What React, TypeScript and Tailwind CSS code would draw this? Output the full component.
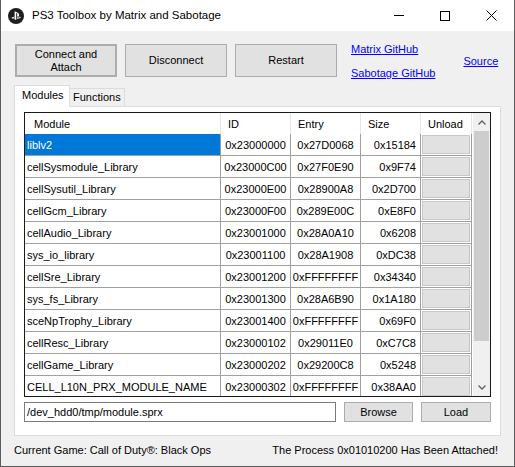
import React from 'react';

type ModuleRow = {
  name: string;
  id: string;
  entry: string;
  size: string;
};

const rows: ModuleRow[] = [
  { name: 'liblv2', id: '0x23000000', entry: '0x27D0068', size: '0x15184' },
  { name: 'cellSysmodule_Library', id: '0x23000C00', entry: '0x27F0E90', size: '0x9F74' },
  { name: 'cellSysutil_Library', id: '0x23000E00', entry: '0x28900A8', size: '0x2D700' },
  { name: 'cellGcm_Library', id: '0x23000F00', entry: '0x289E00C', size: '0xE8F0' },
  { name: 'cellAudio_Library', id: '0x23001000', entry: '0x28A0A10', size: '0x6208' },
  { name: 'sys_io_library', id: '0x23001100', entry: '0x28A1908', size: '0xDC38' },
  { name: 'cellSre_Library', id: '0x23001200', entry: '0xFFFFFFFF', size: '0x34340' },
  { name: 'sys_fs_Library', id: '0x23001300', entry: '0x28A6B90', size: '0x1A180' },
  { name: 'sceNpTrophy_Library', id: '0x23001400', entry: '0xFFFFFFFF', size: '0x69F0' },
  { name: 'cellResc_Library', id: '0x23000102', entry: '0x29011E0', size: '0xC7C8' },
  { name: 'cellGame_Library', id: '0x23000202', entry: '0x29200C8', size: '0x5248' },
  { name: 'CELL_L10N_PRX_MODULE_NAME', id: '0x23000302', entry: '0xFFFFFFFF', size: '0x38AA0' },
];

const cols = 'grid grid-cols-[196px_70px_70px_60px_51px]';

function PsLogo() {
  return (
    <svg width="16" height="16" viewBox="0 0 16 16">
      <circle cx="8" cy="8" r="8" fill="#1f1f1f" />
      <path d="M6.6 3.6v8l1.6.5V5.6c0-.4.2-.6.5-.5.4.1.5.5.5.9v2.4c1.1.5 1.9 0 1.9-1.4 0-1.5-.5-2.1-2-2.6-.8-.3-1.7-.6-2.5-.8z" fill="#fff" />
      <path d="M8.9 10.6l2.7-1c.3-.1.3-.3 0-.4-.3-.1-.8-.1-1.1 0l-1.6.6V8.9l.1 0s.5-.2 1.1-.2c.6-.1 1.4 0 2 .2.7.2.8.6.6.8-.2.2-.6.4-.6.4l-3.2 1.2v-.7zM4.4 10.5c-.8-.2-.9-.7-.6-.9.3-.2.9-.4.9-.4l1.7-.6v.9l-1.3.4c-.2.1-.3.3 0 .3.2.1.6.1.8 0l.5-.2v.8c-.5.1-1.3.1-2-.3z" fill="#fff" />
    </svg>
  );
}

function WinButton({ children, className = '' }: { children: React.ReactNode; className?: string }) {
  return (
    <div className={`flex items-center justify-center bg-[#e1e1e1] border border-[#adadad] text-black leading-[13px] text-center ${className}`}>
      {children}
    </div>
  );
}

export default function App() {
  return (
    <div className="w-[515px] h-[467px] flex flex-col border-x border-b border-[#5b5b5b] bg-[#f0f0f0] font-['Liberation_Sans',Arial,sans-serif] text-[11px] leading-[13px] text-black overflow-hidden">
      {/* title bar */}
      <div className="h-[31px] shrink-0 bg-white flex items-center">
        <div className="pl-[7px] pr-[8px] pt-[1px]">
          <PsLogo />
        </div>
        <span className="text-[11.5px]">PS3 Toolbox by Matrix and Sabotage</span>
        <div className="ml-auto flex h-full">
          <div className="w-[46px] flex items-center justify-center">
            <div className="w-[10px] h-px bg-black" />
          </div>
          <div className="w-[46px] flex items-center justify-center">
            <div className="w-[10px] h-[10px] border border-black" />
          </div>
          <div className="w-[46px] flex items-center justify-center">
            <svg width="11" height="11" viewBox="0 0 11 11">
              <path d="M0.5 0.5L10.5 10.5M10.5 0.5L0.5 10.5" stroke="#000" strokeWidth="1" />
            </svg>
          </div>
        </div>
      </div>

      {/* body */}
      <div className="flex-1 flex flex-col pl-[13px] pt-[13px]">
        <div className="flex pl-[1px] h-[33px]">
          <div className="flex gap-[8px]">
            <WinButton className="w-[102px] h-[33px] border-2 border-[#0078d7]">
              Connect and
              <br />
              Attach
            </WinButton>
            <WinButton className="w-[102px] h-[33px]">Disconnect</WinButton>
            <WinButton className="w-[102px] h-[33px]">Restart</WinButton>
          </div>
          <div className="ml-[14px] -mt-[1px] flex flex-col gap-[11px]">
            <span className="text-[#0000ff] underline">Matrix GitHub</span>
            <span className="text-[#0000ff] underline">Sabotage GitHub</span>
          </div>
          <div className="ml-[28px] pt-[11px]">
            <span className="text-[#0000ff] underline">Source</span>
          </div>
        </div>

        {/* tabs */}
        <div className="mt-[8px] flex items-end h-[22px] relative z-10">
          <div className="w-[56px] h-[22px] bg-white border border-b-0 border-[#dcdcdc] pl-[7px] pt-[3px]">Modules</div>
          <div className="w-[55px] h-[19px] bg-[#f0f0f0] border border-l-0 border-[#dcdcdc] pl-[3px] pt-[2px]">Functions</div>
        </div>

        {/* panel */}
        <div className="w-[487px] h-[330px] -mt-px bg-white border border-[#dcdcdc] pt-[5px] pl-[9px] flex flex-col">
          <div className="w-[467px] h-[285px] border border-[#1a1a1a] flex overflow-hidden">
            <div className="flex flex-col w-[447px]">
              <div className={`${cols} h-[21px] shrink-0 items-center`}>
                <div className="h-full border-r border-[#e5e5e5] pl-[9px] pt-px flex items-center">Module</div>
                <div className="h-full border-r border-[#e5e5e5] pl-[7px] pt-px flex items-center">ID</div>
                <div className="h-full border-r border-[#e5e5e5] pl-[7px] pt-px flex items-center">Entry</div>
                <div className="h-full border-r border-[#e5e5e5] pl-[7px] pt-px flex items-center">Size</div>
                <div className="h-full border-r border-[#e5e5e5] pl-[7px] pt-px flex items-center">Unload</div>
              </div>
              {rows.map((r, i) => (
                <div key={r.name} className={`${cols} h-[22px] shrink-0`}>
                  <div
                    className={`border-r border-b border-[#a0a0a0] pl-[2px] pt-px flex items-center ${
                      i === 0 ? 'bg-[#0078d7] text-white' : ''
                    }`}
                  >
                    {r.name}
                  </div>
                  <div className="border-r border-b border-[#a0a0a0] pt-px flex items-center justify-center">{r.id}</div>
                  <div className="border-r border-b border-[#a0a0a0] pt-px flex items-center justify-center">{r.entry}</div>
                  <div className="border-r border-b border-[#a0a0a0] pt-px flex items-center justify-end pr-[4px]">{r.size}</div>
                  <div className="border-r border-b border-[#a0a0a0] p-px">
                    <div className="w-full h-full bg-[#e1e1e1] border border-[#c8c8c8]" />
                  </div>
                </div>
              ))}
            </div>
            {/* scrollbar */}
            <div className="w-[17px] ml-px bg-[#f0f0f0] flex flex-col items-center">
              <div className="h-[18px] w-full flex items-center justify-center">
                <svg width="8" height="5" viewBox="0 0 8 5">
                  <path d="M0.5 4.5L4 1L7.5 4.5" fill="none" stroke="#606060" strokeWidth="1.3" />
                </svg>
              </div>
              <div className="w-[15px] h-[210px] bg-[#cdcdcd]" />
              <div className="flex-1" />
              <div className="h-[18px] w-full flex items-center justify-center">
                <svg width="8" height="5" viewBox="0 0 8 5">
                  <path d="M0.5 0.5L4 4L7.5 0.5" fill="none" stroke="#606060" strokeWidth="1.3" />
                </svg>
              </div>
            </div>
          </div>

          <div className="mt-[5px] flex items-center h-[20px]">
            <div className="w-[312px] h-[20px] border border-[#7a7a7a] pl-[2px] flex items-center">/dev_hdd0/tmp/module.sprx</div>
            <WinButton className="ml-[8px] w-[69px] h-[20px]">Browse</WinButton>
            <WinButton className="ml-[8px] w-[70px] h-[20px]">Load</WinButton>
          </div>
        </div>

        {/* status */}
        <div className="flex-1 flex items-center justify-between pr-[16px] pb-[1px]">
          <span>Current Game: Call of Duty®: Black Ops</span>
          <span>The Process 0x01010200 Has Been Attached!</span>
        </div>
      </div>
    </div>
  );
}
